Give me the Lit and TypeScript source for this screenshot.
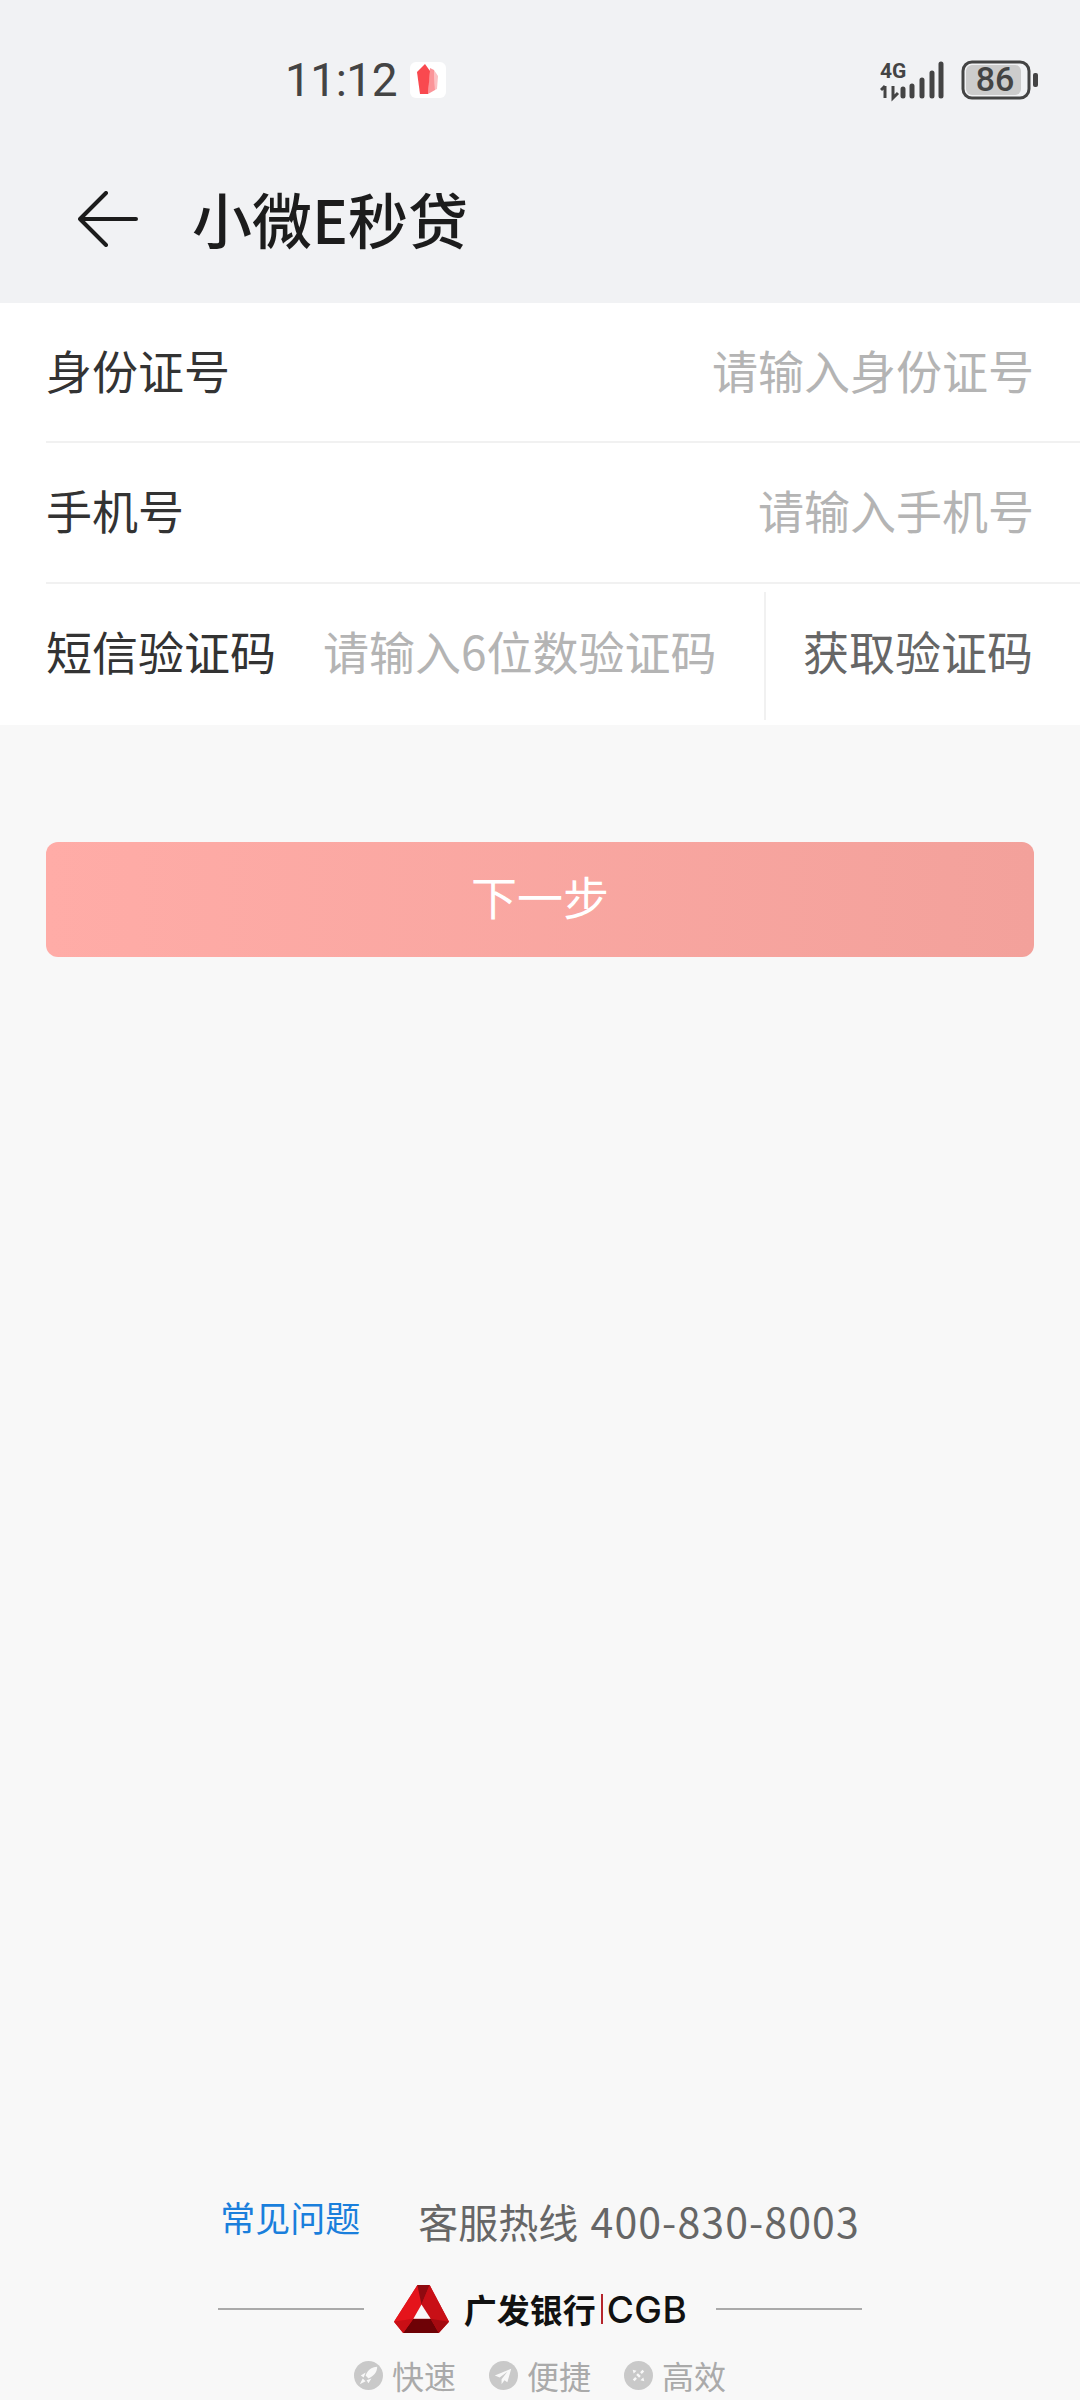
import { LitElement, html, css } from 'lit';
import { customElement } from 'lit/decorators.js';

const FONT = css`'Noto Sans CJK SC', 'Noto Sans', sans-serif`;

@customElement('app-root')
export class AppRoot extends LitElement {
  static styles = css`
    :host {
      display: block;
      width: 1080px;
      height: 2400px;
      background: #f8f8f8;
      font-family: ${FONT};
      overflow: hidden;
    }
    .page {
      height: 2400px;
      display: flex;
      flex-direction: column;
    }

    .top {
      height: 303px;
      background: #f1f2f4;
      display: flex;
      flex-direction: column;
    }
    .status {
      height: 160px;
      padding: 0 42px 0 285px;
      box-sizing: border-box;
      display: flex;
      align-items: center;
      justify-content: space-between;
      color: #444;
    }
    .clock {
      display: flex;
      align-items: center;
      gap: 13px;
      font-family: Roboto, sans-serif;
      font-size: 46px;
      letter-spacing: -0.5px;
    }
    .sys {
      display: flex;
      align-items: center;
      gap: 15px;
    }
    .nav {
      flex: 1;
      display: flex;
      align-items: center;
      padding: 0 0 26px 78px;
    }
    .nav h1 {
      margin: 0 0 2px 54px;
      font-size: 60px;
      font-weight: 500;
      line-height: 70px;
      color: #1c1c1c;
    }

    .form {
      background: #fff;
    }
    .row {
      height: 140px;
      margin-left: 46px;
      display: flex;
      align-items: center;
      justify-content: space-between;
      border-bottom: 2px solid #f1f1f1;
      box-sizing: border-box;
      padding: 0 46px 7px 0;
      font-size: 46px;
      color: #333;
    }
    .row.mid {
      height: 141px;
    }
    .row.code {
      height: 141px;
      border-bottom: none;
      padding: 0 0 9px;
      justify-content: flex-start;
    }
    .hint {
      color: #b4b4b4;
    }
    .code .hint {
      margin-left: 47px;
      flex: 1;
    }
    .get {
      align-self: flex-start;
      height: 128px;
      margin-top: 8px;
      flex: 0 0 316px;
      box-sizing: border-box;
      padding: 0 0 12px 37px;
      border-left: 2px solid #f1f1f1;
      display: flex;
      align-items: center;
      white-space: nowrap;
      color: #666;
    }

    .next {
      margin: 117px 46px 0;
      height: 115px;
      box-sizing: border-box;
      padding-bottom: 10px;
      border-radius: 12px;
      background: linear-gradient(90deg, #ffaca7, #f3a19b);
      color: #fff;
      font-size: 46px;
      display: flex;
      align-items: center;
      justify-content: center;
    }

    .foot {
      margin-top: auto;
      display: flex;
      flex-direction: column;
      align-items: center;
      padding-bottom: 1px;
    }
    .help {
      height: 60px;
      display: flex;
      align-items: center;
      gap: 58px;
      font-size: 40px;
      color: #666;
    }
    .help a {
      font-size: 35px;
      color: #1a7fdc;
      margin-top: -8px;
    }
    .help .num {
      font-size: 41px;
      letter-spacing: 1.1px;
      margin-left: 2px;
    }
    .brand {
      margin-top: 31px;
      display: flex;
      align-items: center;
      height: 56px;
    }
    .rule {
      width: 146px;
      height: 2px;
      background: #aaa;
    }
    .logo {
      margin: 0 29px 0 30px;
      display: flex;
      align-items: center;
      gap: 15px;
      font-size: 33px;
      font-weight: 700;
      color: #111;
    }
    .logo .bar {
      width: 2px;
      height: 30px;
      background: #b5252c;
      margin: 0 4px 0 5px;
    }
    .logo .cgb {
      font-family: Inter, sans-serif;
      font-size: 37px;
      font-weight: 500;
      letter-spacing: 0.5px;
    }
    .logo .name {
      display: flex;
      align-items: center;
    }
    .tags {
      margin-top: 14px;
      height: 48px;
      display: flex;
      align-items: center;
      gap: 33px;
      font-size: 32px;
      color: #aaa;
    }
    .tag {
      display: flex;
      align-items: center;
      gap: 9px;
    }
  `;

  render() {
    return html`
      <div class="page">
        <div class="top">
          <div class="status">
            <div class="clock">
              <span>11:12</span>
              <svg width="36" height="36" viewBox="0 0 36 36">
                <rect width="36" height="36" rx="6" fill="#fff" />
                <path d="M24 8l4 6-1 13-2 1z" fill="#fbc0c3" />
                <path d="M20 6l4 2 1 20-7 4z" fill="#fb9499" />
                <path d="M7 10l8-8 5 7-2 23-8 0z" fill="#f9494f" />
              </svg>
            </div>
            <div class="sys">
              <svg width="66" height="46" viewBox="0 -4 66 46">
                <text x="0" y="17" font-family="Roboto, sans-serif" font-size="21" font-weight="700" fill="#444">4G</text>
                <path d="M5 25v12M1 29l4-4M13 25v12l5-5" stroke="#444" stroke-width="3" fill="none" />
                <g stroke="#444" stroke-width="5" stroke-linecap="round">
                  <path d="M23 28v7M32 25v10M42 19v16M52 12v23M61 3v32" />
                </g>
              </svg>
              <svg width="77" height="44" viewBox="0 -2 77 44">
                <rect x="2" y="2" width="66" height="36" rx="9" fill="none" stroke="#444" stroke-width="3" />
                <rect x="5" y="5" width="55" height="30" rx="6" fill="#ccc" />
                <text x="34" y="31" text-anchor="middle" font-family="Roboto, sans-serif" font-size="34" font-weight="500" fill="#444">86</text>
                <rect x="72" y="13" width="5" height="14" rx="2" fill="#444" />
              </svg>
            </div>
          </div>
          <div class="nav">
            <svg width="60" height="56" viewBox="0 0 60 56" fill="none" stroke="#1c1c1c" stroke-width="4" stroke-linecap="round" stroke-linejoin="round">
              <path d="M58 28H2M28 2L2 28l26 26" />
            </svg>
            <h1>小微E秒贷</h1>
          </div>
        </div>

        <div class="form">
          <div class="row"><span>身份证号</span><span class="hint">请输入身份证号</span></div>
          <div class="row mid"><span>手机号</span><span class="hint">请输入手机号</span></div>
          <div class="row code">
            <span>短信验证码</span>
            <span class="hint">请输入6位数验证码</span>
            <span class="get">获取验证码</span>
          </div>
        </div>

        <div class="next">下一步</div>

        <div class="foot">
          <div class="help"><a>常见问题</a><span>客服热线<span class="num"> 400-830-8003</span></span></div>
          <div class="brand">
            <div class="rule"></div>
            <div class="logo">
              <svg width="55" height="48" viewBox="0 0 54 47">
                <path d="M23 0h12L54 36 44 47H9L0 36z" fill="#d2121a" />
                <path d="M23 0l4 19-8 14L0 36z" fill="#e5141b" />
                <path d="M23 0h12l-8 19z" fill="#8f0a10" />
                <path d="M35 0L54 36 36 33 27 19z" fill="#c80f16" />
                <path d="M19 33h17l8 14H9z" fill="#6e0206" />
                <path d="M0 36l19-3-10 14z" fill="#c90f15" />
                <path d="M54 36l-18-3 8 14z" fill="#a50a10" />
                <path d="M27 19l9 14H19z" fill="#f8f8f8" />
              </svg>
              <span class="name">广发银行<span class="bar"></span><span class="cgb">CGB</span></span>
            </div>
            <div class="rule"></div>
          </div>
          <div class="tags">
            <span class="tag">
              <svg width="29" height="29" viewBox="0 0 30 30">
                <circle cx="15" cy="15" r="15" fill="#c9c9c9" />
                <path d="M24 6c-6 0-10 4-12 9l3 3c5-2 9-6 9-12zM7 15l5-3-2 5zM15 23l3-5-5 2zM9 18l-3 6 6-3z" fill="#f8f8f8" />
              </svg>
              快速
            </span>
            <span class="tag">
              <svg width="29" height="29" viewBox="0 0 30 30">
                <circle cx="15" cy="15" r="15" fill="#c9c9c9" />
                <path d="M23 8L6 15l5 2 8-6-6 8v5l3-4 3 2z" fill="#f8f8f8" />
              </svg>
              便捷
            </span>
            <span class="tag">
              <svg width="29" height="29" viewBox="0 0 30 30">
                <circle cx="15" cy="15" r="15" fill="#c9c9c9" />
                <path d="M9 9l4 1-3 3zM21 21l-4-1 3-3z" fill="#f8f8f8" />
                <path d="M20 10l-2.500 2.500M12.500 17.500L10 20M13.500 13.500l3 3" stroke="#f8f8f8" stroke-width="2.500" fill="none" />
              </svg>
              高效
            </span>
          </div>
        </div>
      </div>
    `;
  }
}
